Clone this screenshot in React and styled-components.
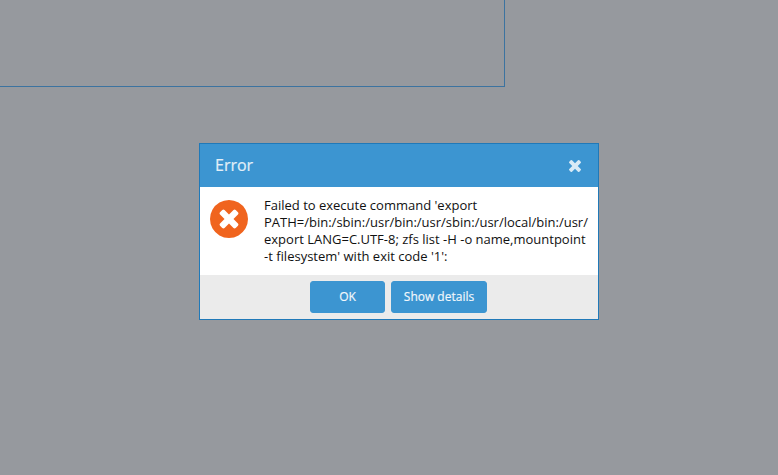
import React from 'react';
import styled, { createGlobalStyle } from 'styled-components';

const GlobalStyle = createGlobalStyle`
  * { box-sizing: border-box; }
  body { margin: 0; background: #96999e; font-family: "Open Sans", sans-serif; }
`;
const Page = styled.main`
  width: 778px;
  height: 475px;
  background: #96999e;
  overflow: hidden;
`;
const BackgroundPanel = styled.section`
  width: 505px;
  height: 87px;
  border: solid #3c73a0;
  border-width: 0 1px 1px 0;
`;
const Dialog = styled.section`
  width: 400px;
  height: 177px;
  margin: 56px 0 0 199px;
  border: 1px solid #2079b8;
  background: #fff;
  display: flex;
  flex-direction: column;
`;
const Header = styled.header`
  height: 43px;
  padding: 0 17px 0 15px;
  background: #3c95d1;
  color: #e2eff8;
  display: flex;
  align-items: center;
  justify-content: space-between;
`;
const Title = styled.h1`
  margin: 0;
  padding-bottom: 2px;
  font-size: 16px;
  font-weight: 400;
  line-height: 20px;
  -webkit-text-stroke: 0.2px currentColor;
`;
const CloseButton = styled.button`
  border: 0;
  padding: 0;
  background: none;
  color: #d8eaf6;
  display: flex;
`;
const CloseGlyph = styled.svg`
  width: 12px;
  height: 12px;
  fill: currentColor;
`;
const Body = styled.div`
  height: 88px;
  padding: 10px 10px 0;
  display: flex;
  gap: 16px;
`;
const ErrorIcon = styled.svg`
  width: 38px;
  height: 38px;
  margin-top: 3px;
  flex: none;
  fill: #f0641e;
`;
const Message = styled.p`
  margin: 0;
  color: #111;
  font-size: 13px;
  line-height: 17px;
  white-space: pre;
`;
const Footer = styled.footer`
  height: 44px;
  padding: 6px 1px 0 0;
  background: #ebebeb;
  display: flex;
  justify-content: center;
  gap: 6px;
`;
const ActionButton = styled.button`
  width: ${({ $width }) => $width}px;
  height: 32px;
  padding: 0;
  border: 1px solid #3c95d1;
  border-radius: 3px;
  background: #3c95d1;
  color: #f3f8fc;
  font: 400 12px/16px "Open Sans", sans-serif;
  -webkit-text-stroke: 0.15px currentColor;
`;

export default function App() {
  return (
    <Page>
      <GlobalStyle />
      <BackgroundPanel />
      <Dialog role="dialog">
        <Header>
          <Title>Error</Title>
          <CloseButton aria-label="Close">
            <CloseGlyph viewBox="110 366 1188 1188" aria-hidden="true">
              <path d="M1298 1322q0 40-28 68l-136 136q-28 28-68 28t-68-28l-294-294-294 294q-28 28-68 28t-68-28l-136-136q-28-28-28-68t28-68l294-294-294-294q-28-28-28-68t28-68l136-136q28-28 68-28t68 28l294 294 294-294q28-28 68-28t68 28l136 136q28 28 28 68t-28 68l-294 294 294 294q28 28 28 68z" />
            </CloseGlyph>
          </CloseButton>
        </Header>
        <Body>
          <ErrorIcon viewBox="128 128 1536 1536" aria-hidden="true">
            <path d="M1277 1122q0-26-19-45l-181-181 181-181q19-19 19-45 0-27-19-46l-90-90q-19-19-46-19-26 0-45 19l-181 181-181-181q-19-19-45-19-27 0-46 19l-90 90q-19 19-19 46 0 26 19 45l181 181-181 181q-19 19-19 45 0 27 19 46l90 90q19 19 46 19 26 0 45-19l181-181 181 181q19 19 45 19 27 0 46-19l90-90q19-19 19-46zm387-226q0 209-103 385.5t-279.5 279.5-385.5 103-385.5-103-279.5-279.5-103-385.5 103-385.5 279.5-279.5 385.5-103 385.5 103 279.5 279.5 103 385.5z" />
          </ErrorIcon>
          <Message>{`Failed to execute command 'export
PATH=/bin:/sbin:/usr/bin:/usr/sbin:/usr/local/bin:/usr/
export LANG=C.UTF-8; zfs list -H -o name,mountpoint
-t filesystem' with exit code '1':`}</Message>
        </Body>
        <Footer>
          <ActionButton $width={75}>OK</ActionButton>
          <ActionButton $width={96}>Show details</ActionButton>
        </Footer>
      </Dialog>
    </Page>
  );
}
